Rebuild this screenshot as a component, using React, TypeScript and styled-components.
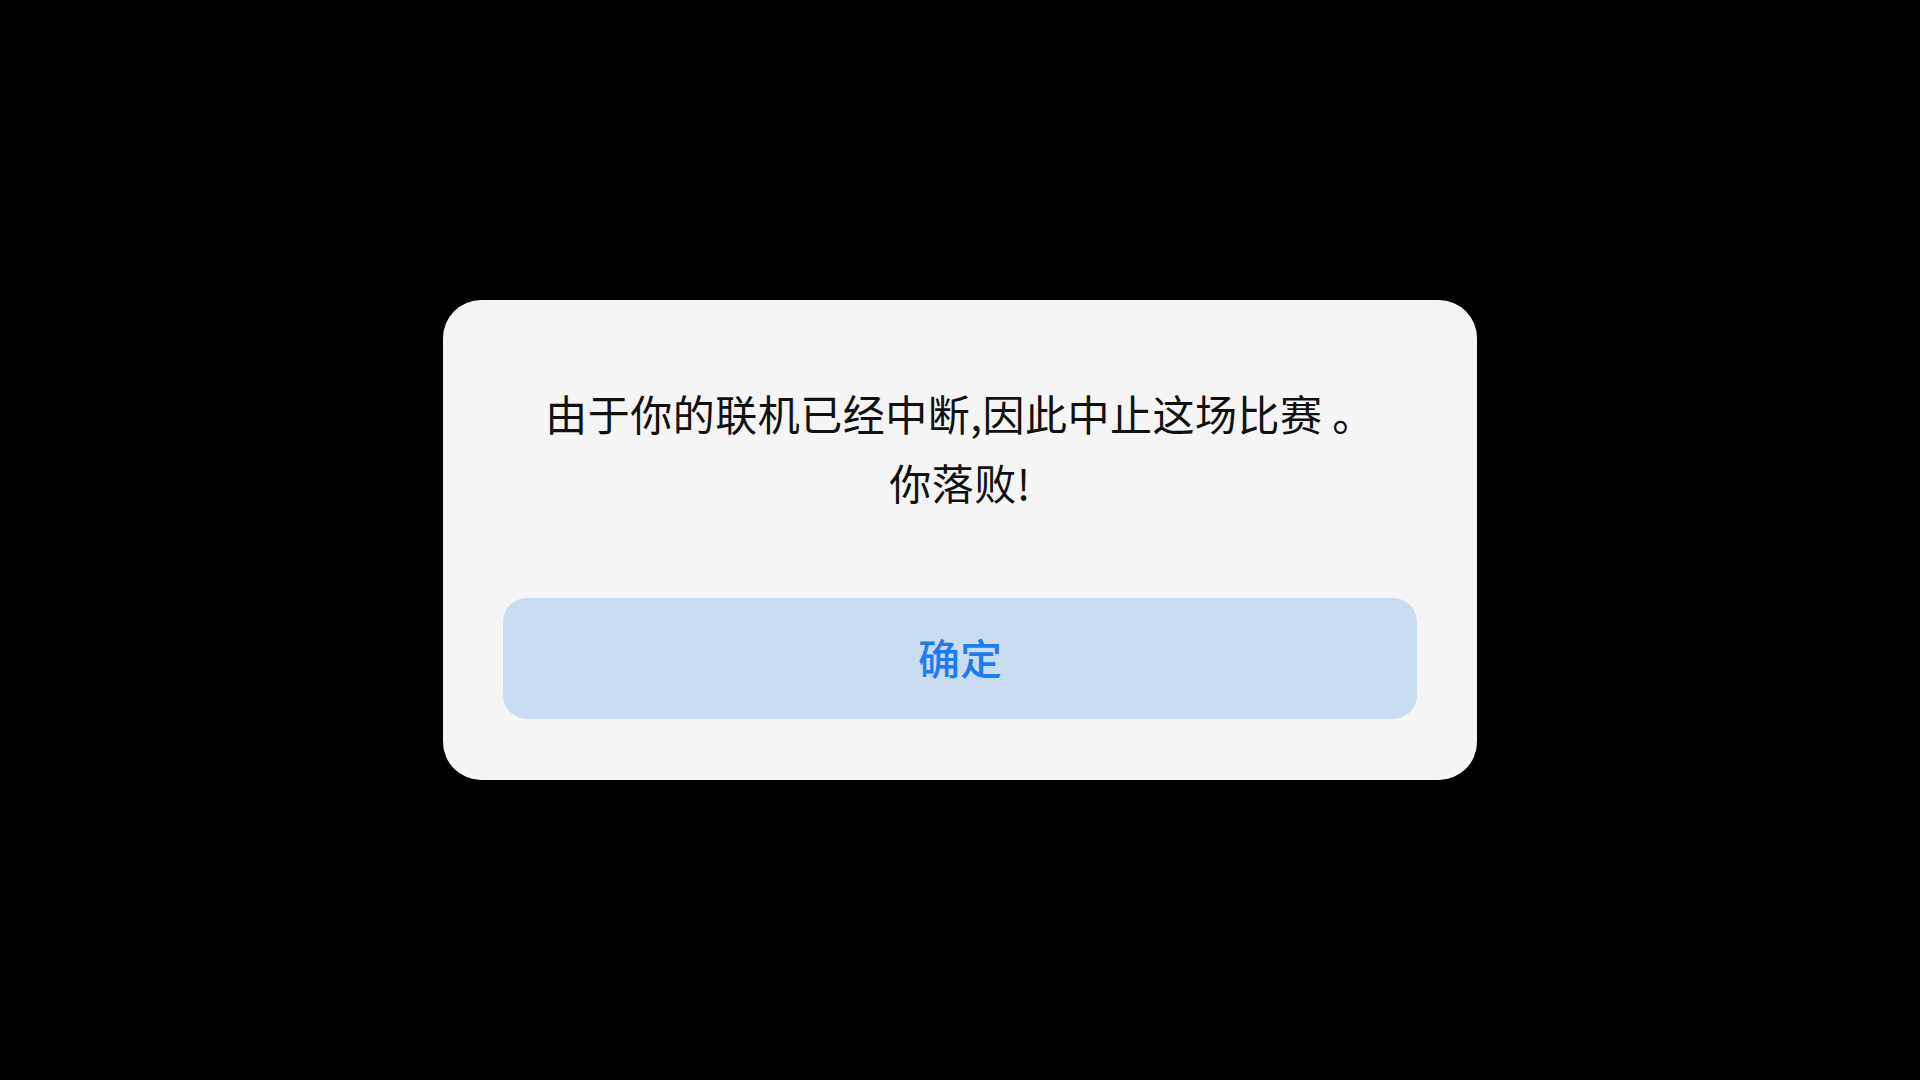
import React from "react";
import styled, { createGlobalStyle } from "styled-components";

const Global = createGlobalStyle`
  html, body { margin: 0; padding: 0; background: #000; }
  body { font-family: "Noto Sans CJK SC", "Noto Sans", sans-serif; }
`;

const Screen = styled.div`
  width: 1920px;
  height: 1080px;
  background: #000;
  display: flex;
  align-items: center;
  justify-content: center;
`;

const Dialog = styled.div`
  width: 1034px;
  height: 480px;
  box-sizing: border-box;
  background: #f5f5f5;
  border-radius: 38px;
  padding: 78px 60px 61px;
  display: flex;
  flex-direction: column;
  align-items: stretch;
`;

const Message = styled.p`
  margin: 0;
  font-family: "Noto Sans CJK SC", sans-serif;
  font-size: 42px;
  line-height: 69px;
  font-weight: 400;
  letter-spacing: 0.5px;
  color: #111;
  text-align: center;
  flex: 1;
`;

const ConfirmButton = styled.button`
  height: 121px;
  border: none;
  border-radius: 24px;
  background: #cadcf2;
  color: #1c7cf0;
  font-family: "Noto Sans CJK SC", sans-serif;
  font-size: 42px;
  font-weight: 500;
  padding: 0 0 4px;
  cursor: pointer;
`;

export default function App() {
  return (
    <>
      <Global />
      <Screen>
        <Dialog>
          <Message>
            由于你的联机已经中断,因此中止这场比赛 。
            <br />
            你落败!
          </Message>
          <ConfirmButton>确定</ConfirmButton>
        </Dialog>
      </Screen>
    </>
  );
}
